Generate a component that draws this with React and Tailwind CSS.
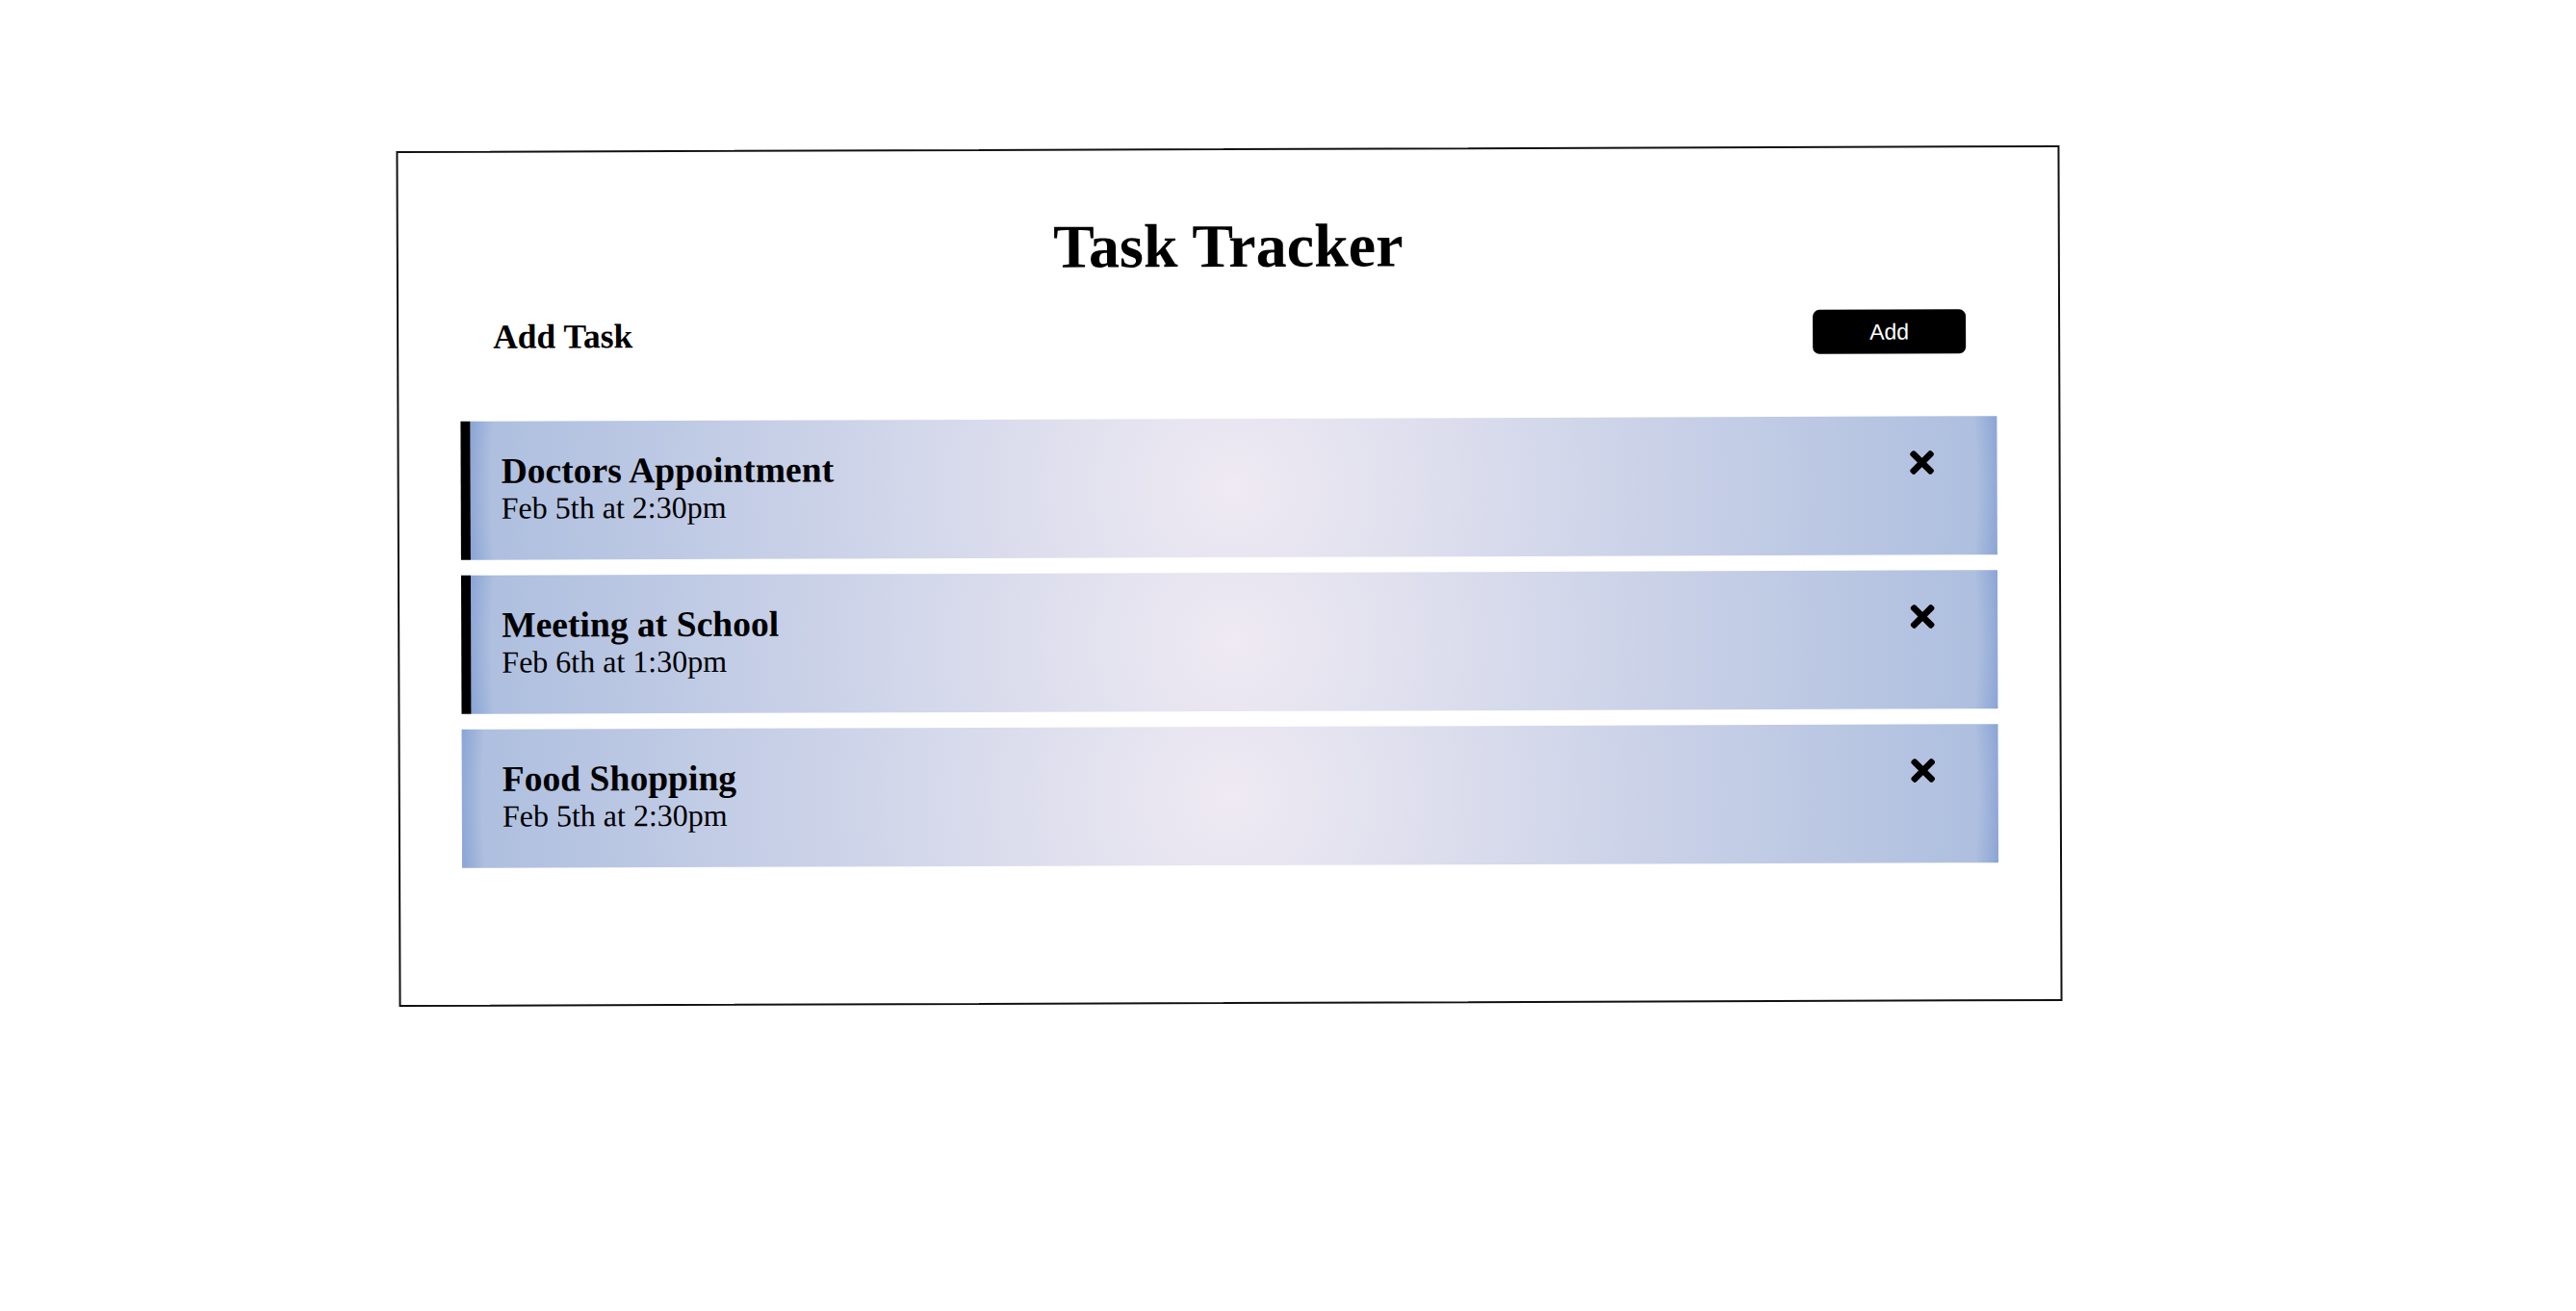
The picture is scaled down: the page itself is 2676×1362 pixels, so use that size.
import { FaTimes } from "react-icons/fa";

const tasks = [
  { id: 1, text: "Doctors Appointment", day: "Feb 5th at 2:30pm", reminder: true },
  { id: 2, text: "Meeting at School", day: "Feb 6th at 1:30pm", reminder: true },
  { id: 3, text: "Food Shopping", day: "Feb 5th at 2:30pm", reminder: false },
];

function Task({ task }) {
  return (
    <div
      className={
        task.reminder
          ? "flex justify-between h-[144px] pt-[32px] pl-[32px] pr-[60px] border-l-[10px] border-black bg-[radial-gradient(circle,#efeaf3_0%,#aebfdf_97%,#89a4d5_100%)]"
          : "flex justify-between h-[144px] pt-[32px] pl-[42px] pr-[60px] bg-[radial-gradient(circle,#efeaf3_0%,#aebfdf_97%,#89a4d5_100%)]"
      }
    >
      <div>
        <h3 className="text-[37.6px] leading-[40px] font-bold">{task.text}</h3>
        <p className="text-[32px] leading-[37px]">{task.day}</p>
      </div>
      <FaTimes className="text-[36px] -mt-[2px] text-black" />
    </div>
  );
}

export default function App() {
  return (
    <div className="h-screen overflow-hidden bg-white text-black pt-[154px] font-['Liberation_Serif',serif]">
      <div className="w-[1728px] h-[889px] ml-[413px] border-2 border-[#111] bg-white rotate-[-0.2deg] pt-[64px]">
        {/* Header */}
        <h1 className="text-center text-[64px] leading-[72px] font-bold">Task Tracker</h1>

        <div className="flex justify-between items-center h-[46px] mt-[32px] pl-[98px] pr-[96px]">
          <h2 className="text-[35.5px] leading-[40px] font-bold">Add Task</h2>
          <button className="w-[159px] h-[46px] rounded-[7px] bg-black text-white text-[23px] font-['Liberation_Sans',sans-serif]">
            Add
          </button>
        </div>

        {/* Lista de tareas */}
        <div className="flex flex-col gap-[16px] mt-[65px] mx-[64px]">
          {tasks.map((task) => (
            <Task key={task.id} task={task} />
          ))}
        </div>
      </div>
    </div>
  );
}
